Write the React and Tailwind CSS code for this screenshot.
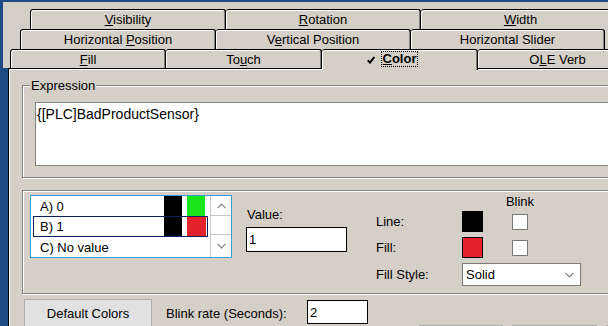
import React from "react";

const GRAY = "bg-[#d4d0c8]";

function Tab({ w, first, children, h = "h-[20px]" }) {
  return (
    <div
      className={`flex-none ${w} ${h} ${GRAY} flex items-center justify-center border-t border-r border-black rounded-t-[3px] shadow-[inset_1px_1px_0_#fff,inset_-1px_0_0_#808080] ${
        first ? "border-l" : ""
      }`}
    >
      {children}
    </div>
  );
}

function Chevron({ up }) {
  return (
    <svg width="9" height="6" viewBox="0 0 9 6">
      <polyline
        points={up ? "0.5,5 4.5,1 8.5,5" : "0.5,1 4.5,5 8.5,1"}
        fill="none"
        stroke="#8a8a8a"
        strokeWidth="1.2"
      />
    </svg>
  );
}

export default function App() {
  return (
    <div className="w-[608px] h-[326px] overflow-hidden bg-[#1d4c85] font-['Liberation_Sans',Arial,sans-serif] text-[13px] leading-[15px] text-black">
      {/* Tab header */}
      <div className={`mt-[2px] ml-[3px] ${GRAY} pt-[7px] h-[66px]`}>
        <div className="flex pl-[27px] h-[20px]">
          <Tab w="w-[196px]" first>
            <span><u>V</u>isibility</span>
          </Tab>
          <Tab w="w-[195px]">
            <span><u>R</u>otation</span>
          </Tab>
          <Tab w="w-[200px]">
            <span><u>W</u>idth</span>
          </Tab>
        </div>
        <div className="flex pl-[17px] h-[20px]">
          <Tab w="w-[196px]" first>
            <span>Horizontal <u>P</u>osition</span>
          </Tab>
          <Tab w="w-[195px]">
            <span>V<u>e</u>rtical Position</span>
          </Tab>
          <Tab w="w-[194px]">
            <span>Horizontal Slider</span>
          </Tab>
        </div>
        <div className="flex items-start pl-[7px] h-[19px]">
          <Tab w="w-[156px]" first h="h-[19px]">
            <span><u>F</u>ill</span>
          </Tab>
          <Tab w="w-[156px]" h="h-[19px]">
            <span>To<u>u</u>ch</span>
          </Tab>
          <div className="relative z-10 -mb-[2px] flex-none w-[156px] h-[21px] bg-[#d4d0c8] border-t border-r border-black rounded-t-[3px] shadow-[inset_1px_1px_0_#fff,inset_-1px_0_0_#808080] flex items-center justify-center pb-[2px] pr-[14px]">
            <svg width="8" height="8" viewBox="0 0 8 8" className="mr-[6px] mt-[2px]">
              <path d="M0.8 4.2 L3 6.6 L7.3 1" fill="none" stroke="#000" strokeWidth="2" />
            </svg>
            <span className="border border-dotted border-black px-[1px] font-bold leading-[14px]">
              <u>C</u>olor
            </span>
          </div>
          <Tab w="w-[160px]" h="h-[19px]">
            <span>O<u>L</u>E Verb</span>
          </Tab>
        </div>
      </div>

      {/* Body */}
      <div className="flex h-[258px]">
        <div className="w-[8px] flex-none" />
        <div className={`flex-1 ${GRAY} border-t border-l border-black shadow-[inset_1px_1px_0_#fff] flex flex-col`}>
          {/* Expression groupbox */}
          <div className="relative ml-[13px] mt-[16px] w-[640px] h-[93px] flex-none border border-[#808080] shadow-[inset_1px_1px_0_#fff,1px_1px_0_#fff]">
            <span className={`absolute left-[7px] top-[-8px] px-[1px] ${GRAY}`}>Expression</span>
            <div className="ml-[12px] mt-[16px] w-[620px] h-[64px] bg-white border border-[#808080] pl-[1px] pt-[3px] text-[14px] leading-[16px]">
              {"{[PLC]BadProductSensor}"}
            </div>
          </div>

          {/* Second groupbox */}
          <div className="ml-[13px] mt-[12px] w-[640px] h-[104px] flex-none border border-[#808080] shadow-[inset_1px_1px_0_#fff,1px_1px_0_#fff] pt-[4px] pl-[7px] flex items-start">
            {/* List */}
            <div className="w-[202px] h-[63px] flex-none bg-white border border-[#3a9bd5] flex">
              <div className="w-[179px] flex flex-col">
                <div className="h-[20px] flex items-stretch">
                  <span className="w-[133px] pl-[9px] flex items-center">A) 0</span>
                  <span className="w-[18px] bg-black" />
                  <span className="w-[5px]" />
                  <span className="w-[18px] bg-[#19e619]" />
                </div>
                <div className="ml-[2px] w-[175px] h-[21px] border border-[#0a1f60] flex items-stretch">
                  <span className="w-[130px] pl-[6px] flex items-center">B) 1</span>
                  <span className="w-[18px] bg-black" />
                  <span className="w-[5px]" />
                  <span className="w-[19px] bg-[#e3222b]" />
                </div>
                <div className="h-[20px] flex items-center pl-[9px]">C) No value</div>
              </div>
              <div className="w-[21px] border-l border-[#c9c9c9] flex flex-col">
                <div className="h-[20px] border-b border-[#c9c9c9] flex items-center justify-center">
                  <Chevron up />
                </div>
                <div className="h-[19px] border-b border-[#c9c9c9]" />
                <div className="flex-1 flex items-center justify-center">
                  <Chevron />
                </div>
              </div>
            </div>

            {/* Value */}
            <div className="ml-[14px] mt-[12px] flex flex-col">
              <span className="pl-[1px]">Value:</span>
              <div className="mt-[5px] w-[101px] h-[25px] bg-white border border-black pl-[2px] flex items-center">1</div>
            </div>

            {/* Right column */}
            <div className="ml-[29px] mt-[-1px] flex flex-col">
              <div className="h-[15px] flex">
                <span className="w-[86px]" />
                <span className="w-[21px]" />
                <span className="ml-[29px] w-[16px] flex justify-center whitespace-nowrap">Blink</span>
              </div>
              <div className="mt-[2px] h-[21px] flex items-center">
                <span className="w-[86px]">Line:</span>
                <span className="w-[21px] h-[21px] bg-black border border-black" />
                <span className="ml-[29px] w-[16px] h-[16px] bg-white border border-[#7a7a7a]" />
              </div>
              <div className="mt-[5px] h-[21px] flex items-center">
                <span className="w-[86px]">Fill:</span>
                <span className="w-[21px] h-[21px] bg-[#e3222b] border border-black" />
                <span className="ml-[29px] w-[16px] h-[16px] bg-white border border-[#7a7a7a]" />
              </div>
              <div className="mt-[5px] h-[23px] flex items-center">
                <span className="w-[86px]">Fill Style:</span>
                <div className="w-[119px] h-[23px] bg-white border border-[#7a7a7a] flex items-center justify-between pl-[3px] pr-[6px]">
                  <span>Solid</span>
                  <Chevron />
                </div>
              </div>
            </div>
          </div>

          {/* Bottom row */}
          <div className="mt-[5px] flex items-start">
            <div className="ml-[15px] w-[128px] h-[28px] flex-none bg-[#e1e1e1] border border-[#adadad] flex items-center justify-center">
              Default Colors
            </div>
            <span className="ml-[14px] w-[141px] h-[28px] flex-none flex items-center whitespace-nowrap">Blink rate (Seconds):</span>
            <div className="mt-[1px] w-[61px] h-[24px] flex-none bg-white border border-black pl-[2px] flex items-center">2</div>
            <div className="ml-[51px] mt-[26px] w-[84px] h-[20px] flex-none bg-[#e1e1e1] border border-[#adadad]" />
            <div className="ml-[9px] mt-[26px] w-[85px] h-[20px] flex-none bg-[#e1e1e1] border border-[#adadad]" />
            <div className="ml-[9px] mt-[26px] w-[40px] h-[20px] flex-none bg-[#e1e1e1] border border-[#adadad]" />
          </div>
        </div>
      </div>
    </div>
  );
}
